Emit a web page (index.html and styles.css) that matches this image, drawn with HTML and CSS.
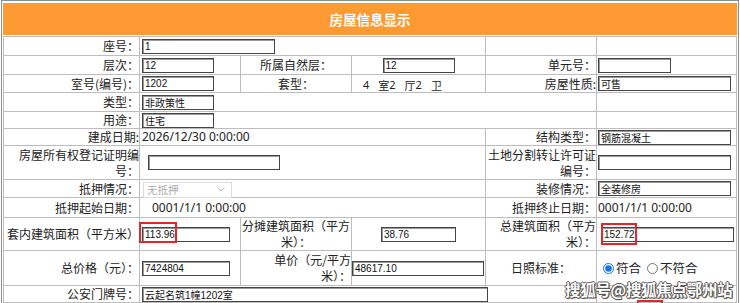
FILE: index.html
```html
<!DOCTYPE html>
<html lang="zh-CN">
<head>
<meta charset="utf-8">
<title>房屋信息显示</title>
<link rel="stylesheet" href="styles.css">
</head>
<body>
<div class="frame">
  <div class="title">房屋信息显示</div>
  <div class="grid">
    <!-- r1 -->
    <div class="lab">座号：</div>
    <div class="span3"><input class="in w133 ml2" value="1"></div>
    <div></div>
    <div></div>
    <!-- r2 -->
    <div class="lab">层次：</div>
    <div><input class="in w72 ml2" value="12"></div>
    <div class="ctr">所属自然层：</div>
    <div class="ctr"><input class="in w72" value="12"></div>
    <div class="lab">单元号：</div>
    <div><input class="in w73 ml1" value=""></div>
    <!-- r3 -->
    <div class="lab">室号(编号)：</div>
    <div><input class="in w72 ml2" value="1202"></div>
    <div class="ctr">套型：</div>
    <div class="suite"><span class="n">4</span>室<span class="n">2</span>厅<span class="n">2</span>卫</div>
    <div class="lab">房屋性质:</div>
    <div><input class="in w133 ml1" value="可售"></div>
    <!-- r4 -->
    <div class="lab">类型：</div>
    <div class="span4"><input class="in w72 ml2" value="非政策性"></div>
    <div></div>
    <!-- r5 -->
    <div class="lab">用途：</div>
    <div class="span4"><input class="in w72 ml2" value="住宅"></div>
    <div></div>
    <!-- r6 -->
    <div class="lab">建成日期:</div>
    <div class="span3 val pl2">2026/12/30 0:00:00</div>
    <div class="lab">结构类型：</div>
    <div><input class="in w133 ml1" value="钢筋混凝土"></div>
    <!-- r7 -->
    <div class="lab">房屋所有权登记证明编号：</div>
    <div class="span3"><input class="in w132 ml8" value=""></div>
    <div class="lab">土地分割转让许可证编号：</div>
    <div><input class="in w133 ml1" value=""></div>
    <!-- r8 -->
    <div class="lab">抵押情况：</div>
    <div class="span3">
      <div class="sel">
        <select disabled><option>无抵押</option></select>
        <svg class="chev" width="8" height="5" viewBox="0 0 8 5"><polyline points="0.5,0.5 4,4 7.5,0.5" fill="none" stroke="#b8b8b8" stroke-width="1"/></svg>
      </div>
    </div>
    <div class="lab">装修情况：</div>
    <div><input class="in w133 ml1" value="全装修房"></div>
    <!-- r9 -->
    <div class="lab">抵押起始日期：</div>
    <div class="span3 val pl12">0001/1/1 0:00:00</div>
    <div class="lab">抵押终止日期：</div>
    <div class="val pl1">0001/1/1 0:00:00</div>
    <!-- r10 -->
    <div class="lab">套内建筑面积（平方米）</div>
    <div class="rel"><input class="in w88 ml2" value="113.96"><span class="mark m1"></span></div>
    <div class="ctr">分摊建筑面积（平方米）：</div>
    <div class="ctr"><input class="in w75" value="38.76"></div>
    <div class="lab">总建筑面积（平方米）：</div>
    <div class="rel"><input class="in w133 ml4" value="152.72"><span class="mark m2"></span></div>
    <!-- r11 -->
    <div class="lab">总价格（元）：</div>
    <div><input class="in w88 ml2" value="7424804"></div>
    <div class="lab">单价（元/平方<br>米）：</div>
    <div><input class="in w132" value="48617.10"></div>
    <div class="ctr">日照标准：</div>
    <div class="radios">
      <label><input type="radio" name="rz" checked>符合</label>
      <label><input type="radio" name="rz">不符合</label>
    </div>
    <!-- r12 -->
    <div class="lab">公安门牌号：</div>
    <div class="span3 ovf"><input class="in w346 ml2" value="云起名筑1幢1202室"></div>
    <div></div>
    <div></div>
  </div>
  <span class="mark m3"></span>
  <div class="wm">搜狐号@搜狐焦点鄂州站</div>
</div>
</body>
</html>
```
FILE: styles.css
```css
* { box-sizing: border-box; }
html, body { margin: 0; padding: 0; background: #fff; }
body {
  font-family: "Noto Sans CJK SC", "Noto Sans", sans-serif;
  font-size: 12px;
  color: #222;
  line-height: 16px;
}
.frame {
  position: relative;
  margin-left: 1px;
  width: 738px;
  height: 303px;
  border: 1px solid #8d8d8d;
  border-bottom: none;
  padding: 2px 1px 0 1px;
  overflow: hidden;
}
.title {
  height: 32px;
  margin-bottom: 1px;
  background: #fe9a33;
  color: #fff;
  font-weight: bold;
  font-size: 13.5px;
  display: flex;
  align-items: center;
  justify-content: center;
}
.grid {
  display: grid;
  width: 734px;
  grid-template-columns: 135px 100px 110px 133px 110px 139px;
  grid-template-rows: 18px 18px 17px 18px 16px 16px 33px 17px 19px 32px 34px 16px;
  gap: 1px;
  padding: 1px;
  background: #bdbdbd;
}
.grid > div {
  background: #fff;
  display: flex;
  align-items: center;
  min-width: 0;
}
.span3 { grid-column: span 3; }
.span4 { grid-column: span 4; }
.lab { justify-content: flex-end; text-align: right; }
.ctr { justify-content: center; text-align: center; }
.rel { position: relative; }
.ovf { overflow: visible; position: relative; z-index: 1; }

.in {
  height: 15px;
  border: 1px solid #454545;
  box-shadow: inset 1px 1px 0 #9a9a9a;
  padding: 0 1px 0 2px;
  font-family: "Liberation Sans", "Noto Sans CJK SC", sans-serif;
  font-size: 10px;
  color: #111;
  background: #fff;
  outline: none;
  flex: none;
}
.w72 { width: 72px; }
.w73 { width: 73px; }
.w75 { width: 75px; }
.w88 { width: 88px; }
.w132 { width: 132px; }
.w133 { width: 133px; }
.w346 { width: 346px; }
.ml1 { margin-left: 1px; }
.ml2 { margin-left: 2px; }
.ml4 { margin-left: 4px; }
.ml8 { margin-left: 8px; }

.val {
  font-family: "Noto Sans", "Noto Sans CJK SC", sans-serif;
  font-size: 12px;
  color: #222;
}
.pl1 { padding-left: 1px; }
.pl2 { padding-left: 2px; }
.pl12 { padding-left: 12px; }

.grid > .suite {
  align-items: flex-end;
  padding-left: 11px;
  font-size: 11px;
  line-height: 14px;
  padding-bottom: 0;
}
.suite .n { margin-right: 9px; font-family: "Noto Sans", sans-serif; }

.sel { position: relative; margin-left: 3px; width: 89px; height: 16px; }
.sel select {
  appearance: none;
  -webkit-appearance: none;
  width: 89px;
  height: 16px;
  border: 1px solid #dcdcdc;
  background: #fff;
  color: #aaa;
  font-family: "Noto Sans CJK SC", sans-serif;
  font-size: 10.5px;
  padding: 0 3px;
  line-height: 14px;
  opacity: 1;
}
.chev { position: absolute; right: 7px; top: 6px; }

.radios { gap: 0; padding-left: 4px; font-size: 12.5px; }
.radios label { display: flex; align-items: center; margin-right: 4px; }
.radios input {
  width: 11px;
  height: 11px;
  margin: 0 2px 0 2px;
  accent-color: #1a73e8;
}

.mark {
  position: absolute;
  border: 2px solid #e2262a;
  pointer-events: none;
}
.m1 { left: -1px; top: 4px; width: 38px; height: 21px; }
.m2 { left: 4px; top: 5px; width: 36px; height: 22px; }
.m3 { left: 635px; top: 299px; width: 26px; height: 10px; }

.wm {
  position: absolute;
  left: 563px;
  top: 278px;
  font-family: "Noto Sans CJK SC", sans-serif;
  font-weight: bold;
  font-size: 15.5px;
  line-height: 20px;
  color: #fff;
  letter-spacing: -0.3px;
  text-shadow: 1px 0 0 #555, -1px 0 0 #555, 0 1px 0 #555, 0 -1px 0 #555, 1px 1px 1px #333;
  white-space: nowrap;
  z-index: 3;
}
```
